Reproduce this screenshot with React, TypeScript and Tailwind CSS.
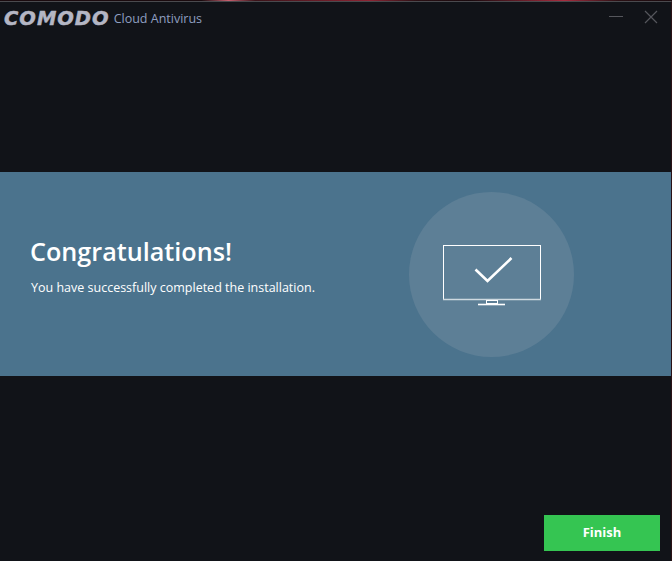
export default function App() {
  return (
    <div className="relative h-[561px] w-[672px] overflow-hidden bg-[#111318] font-['Open_Sans','Noto_Sans',sans-serif]">
      {/* Desktop showing through above the window */}
      <div className="h-[1px] bg-[linear-gradient(90deg,#1a0a0e_0%,#1a0a0e_30%,#c9606f_34%,#3a1218_38%,#8e2433_55%,#2a1014_62%,#1a0a0e_70%,#a82c3e_84%,#2a1014_92%,#1a0a0e_100%)]" />
      <div className="flex h-[560px] flex-col border-t border-r border-t-[#4a4a4e] border-r-[#2a1216]">
        {/* Title bar */}
        <div className="flex h-[170px] items-start justify-between">
          <div className="mt-[5px] flex items-center pl-[4px]">
            <span className="font-['DejaVu_Sans',sans-serif] text-[19.5px] font-bold italic leading-[24px] tracking-[1px] text-[#b4b6c4] [-webkit-text-stroke:0.5px_#b4b6c4]">COMODO</span>
            <span className="ml-[4px] text-[12.5px] leading-[24px] text-[#8f9fc0]">Cloud Antivirus</span>
          </div>
          <div className="mr-[13px] mt-[8px] flex items-center gap-[21px]">
            <svg width="14" height="13" viewBox="0 0 14 13">
              <path d="M0 5.5H14" stroke="#55565c" strokeWidth="1" />
            </svg>
            <svg width="14" height="14" viewBox="0 0 14 14">
              <path d="M1 1L13 13M13 1L1 13" stroke="#55565c" strokeWidth="1.2" />
            </svg>
          </div>
        </div>

        {/* Banner */}
        <div className="flex h-[204px] items-start justify-between bg-[#4b738d] pl-[31px] pr-[97px]">
          <div className="mt-[62px]">
            <h1 className="-ml-[1px] text-[25.2px] font-semibold leading-[34px] text-white">Congratulations!</h1>
            <p className="mt-[11px] text-[12.5px] leading-[18px] text-white">You have successfully completed the installation.</p>
          </div>
          <div className="mt-[20px] flex h-[165px] w-[165px] items-center justify-center rounded-full bg-[#5d7f96]">
            <svg width="100" height="62" viewBox="0 0 100 62" className="ml-[2px] mt-[3px]">
              <rect x="0.5" y="0.5" width="97" height="54" fill="none" stroke="#fff" strokeWidth="1" />
              <path d="M0 54.5H98" stroke="#cfd9e0" strokeWidth="1.5" />
              <rect x="43.5" y="55.5" width="11" height="3" fill="none" stroke="#fff" strokeWidth="1" />
              <path d="M35 59.5H62" stroke="#fff" strokeWidth="1.6" />
              <path d="M32.5 24.5L44.5 36L68.5 13" fill="none" stroke="#fff" strokeWidth="2.6" />
            </svg>
          </div>
        </div>

        {/* Footer */}
        <div className="flex flex-1 items-end justify-end pb-[10px] pr-[11px]">
          <button className="h-[36px] w-[116px] bg-[#35c552] text-[13px] font-bold text-white">Finish</button>
        </div>
      </div>
    </div>
  );
}
